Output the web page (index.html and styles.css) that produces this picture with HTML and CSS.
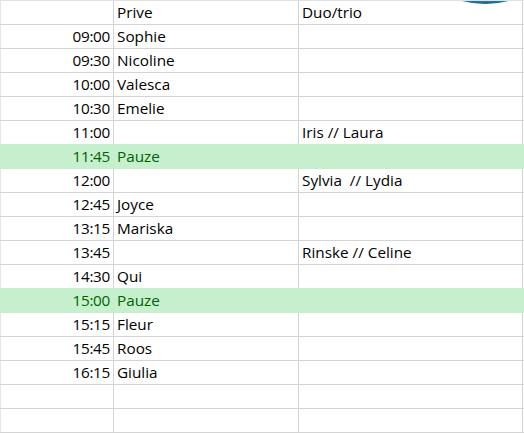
FILE: index.html
```html
<!DOCTYPE html>
<html>
<head>
<meta charset="utf-8">
<link rel="stylesheet" href="styles.css">
</head>
<body>
<div class="sheet">
  <div class="row head"><div class="c t"></div><div class="c n">Prive</div><div class="c d">Duo/trio</div></div>
  <div class="row"><div class="c t">09:00</div><div class="c n">Sophie</div><div class="c d"></div></div>
  <div class="row"><div class="c t">09:30</div><div class="c n">Nicoline</div><div class="c d"></div></div>
  <div class="row"><div class="c t">10:00</div><div class="c n">Valesca</div><div class="c d"></div></div>
  <div class="row"><div class="c t">10:30</div><div class="c n">Emelie</div><div class="c d"></div></div>
  <div class="row"><div class="c t">11:00</div><div class="c n"></div><div class="c d">Iris // Laura</div></div>
  <div class="row pause"><div class="c t">11:45</div><div class="c n">Pauze</div><div class="c d"></div></div>
  <div class="row"><div class="c t">12:00</div><div class="c n"></div><div class="c d">Sylvia&nbsp; // Lydia</div></div>
  <div class="row"><div class="c t">12:45</div><div class="c n">Joyce</div><div class="c d"></div></div>
  <div class="row"><div class="c t">13:15</div><div class="c n">Mariska</div><div class="c d"></div></div>
  <div class="row"><div class="c t">13:45</div><div class="c n"></div><div class="c d">Rinske // Celine</div></div>
  <div class="row"><div class="c t">14:30</div><div class="c n">Qui</div><div class="c d"></div></div>
  <div class="row pause"><div class="c t">15:00</div><div class="c n">Pauze</div><div class="c d"></div></div>
  <div class="row"><div class="c t">15:15</div><div class="c n">Fleur</div><div class="c d"></div></div>
  <div class="row"><div class="c t">15:45</div><div class="c n">Roos</div><div class="c d"></div></div>
  <div class="row"><div class="c t">16:15</div><div class="c n">Giulia</div><div class="c d"></div></div>
  <div class="row"><div class="c t"></div><div class="c n"></div><div class="c d"></div></div>
  <div class="row"><div class="c t"></div><div class="c n"></div><div class="c d"></div></div>
  <svg class="shape" width="60" height="6" viewBox="0 0 60 6">
    <defs>
      <linearGradient id="g" x1="0" y1="0" x2="0" y2="1">
        <stop offset="0" stop-color="#2a86ad"/>
        <stop offset="1" stop-color="#165f82"/>
      </linearGradient>
    </defs>
    <path d="M2 0 Q30 8 56 0 Z" fill="url(#g)"/>
  </svg>
</div>
</body>
</html>
```

FILE: styles.css
```css
html, body {
  margin: 0;
  padding: 0;
  background: #ffffff;
}

.sheet {
  position: relative;
  width: 524px;
  height: 433px;
  overflow: hidden;
  border-top: 1px solid #e1e1e1;
  box-sizing: border-box;
  font-family: "Open Sans", Lato, sans-serif;
  font-size: 15.3px;
  color: #000;
}

.row {
  display: grid;
  grid-template-columns: 114px 185px 224px;
  height: 24px;
  box-sizing: border-box;
  border-bottom: 1px solid #d4d4d4;
  position: relative;
}

.c {
  box-sizing: border-box;
  border-right: 1px solid #d4d4d4;
  line-height: 23px;
  white-space: nowrap;
  overflow: visible;
}

.c.t {
  text-align: right;
  padding-right: 3px;
  letter-spacing: -0.3px;
  border-left: 1px solid #e6e6e6;
}

.c.n,
.c.d {
  padding-left: 3px;
}

.row.pause {
  background: #c6efce;
  color: #006100;
  border-bottom-color: #c6efce;
  box-shadow: 0 -1px 0 #c6efce;
}

.row.pause .c {
  border-right-color: #c6efce;
}

.row.pause .c.t {
  border-left-color: #c6efce;
}

.shape {
  position: absolute;
  top: -1px;
  left: 456px;
}
```
